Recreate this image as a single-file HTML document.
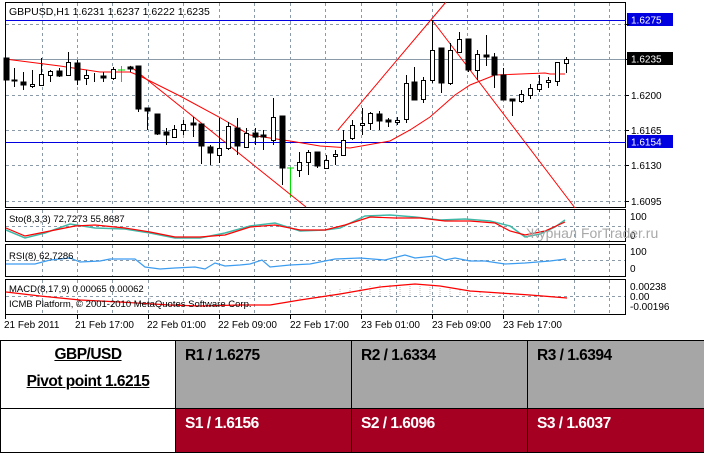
<!DOCTYPE html>
<html><head><meta charset="utf-8"><style>
*{margin:0;padding:0}
body{width:704px;height:455px;background:#fff;overflow:hidden;position:relative;font-family:"Liberation Sans",sans-serif}
svg{position:absolute;left:0;top:0}
table{position:absolute;left:0;top:340px;border-collapse:collapse;width:704px;table-layout:fixed}
td{border:1px solid #000;vertical-align:top;font-weight:bold;font-size:15.5px;padding:6px 0 0 9px;letter-spacing:-0.5px}
.g{background:#a6a6a6;color:#000}
.r{background:#a50021;color:#fff}
.h{text-align:center;padding:5px 0 0 0}
.h u{display:inline-block;margin-bottom:9px}
</style></head><body>
<svg width="704" height="340" xmlns="http://www.w3.org/2000/svg" font-family="Liberation Sans, sans-serif" font-size="10">
<g fill="none" stroke="#000">
<rect x="5.5" y="2.5" width="620" height="205"/>
<rect x="5.5" y="209.5" width="620" height="32"/>
<rect x="5.5" y="244.5" width="620" height="32"/>
<rect x="5.5" y="279.5" width="620" height="35"/>
</g>
<g stroke="#8a9aa8" stroke-dasharray="3,3" stroke-width="1">
<path d="M42.5 3V207M77.5 3V207M112.5 3V207M148.5 3V207M183.5 3V207M219.5 3V207M254.5 3V207M290.5 3V207M325.5 3V207M361.5 3V207M396.5 3V207M432.5 3V207M467.5 3V207M503.5 3V207M538.5 3V207M574.5 3V207M609.5 3V207"/>
<path d="M42.5 210V241M77.5 210V241M112.5 210V241M148.5 210V241M183.5 210V241M219.5 210V241M254.5 210V241M290.5 210V241M325.5 210V241M361.5 210V241M396.5 210V241M432.5 210V241M467.5 210V241M503.5 210V241M538.5 210V241M574.5 210V241M609.5 210V241"/>
<path d="M42.5 245V276M77.5 245V276M112.5 245V276M148.5 245V276M183.5 245V276M219.5 245V276M254.5 245V276M290.5 245V276M325.5 245V276M361.5 245V276M396.5 245V276M432.5 245V276M467.5 245V276M503.5 245V276M538.5 245V276M574.5 245V276M609.5 245V276"/>
<path d="M42.5 280V314M77.5 280V314M112.5 280V314M148.5 280V314M183.5 280V314M219.5 280V314M254.5 280V314M290.5 280V314M325.5 280V314M361.5 280V314M396.5 280V314M432.5 280V314M467.5 280V314M503.5 280V314M538.5 280V314M574.5 280V314M609.5 280V314"/>
<path d="M6 24.5H625M6 95.5H625M6 130.5H625M6 165.5H625M6 201.5H625M6 226.5H625M6 260.5H625M6 296.5H625"/>
</g>
<path d="M6 59.5H625" stroke="#8a9aa8"/>
<path d="M6 20.5H625M6 142.5H625" stroke="#0000e0"/>
<text x="9" y="15" font-size="10.5">GBPUSD,H1  1.6231 1.6237 1.6222 1.6235</text>
<path d="M121.5 66V82M118 70H125M290.5 168V197M287 168H294" stroke="#00e000"/>
<g fill="none" stroke="#f00" stroke-width="1">
<path d="M5 59L60 66L100 72L130 72L140 76L180 96L219 117L250 135L290 141L320 146L350 148L390 141L410 130L430 117L455 95L470 85L495 75L545 73L550 74L565 74"/>
<path d="M130 66L306 207"/>
<path d="M338 130L446 2"/>
<path d="M432 20L575 208"/>
</g>
<g font-size="10">
<rect x="627" y="13" width="46" height="13" fill="#0000e0"/><text x="631" y="23.5" fill="#fff">1.6275</text>
<rect x="627" y="52" width="46" height="13" fill="#000"/><text x="631" y="62.5" fill="#fff">1.6235</text>
<text x="631" y="99">1.6200</text><text x="631" y="134">1.6165</text>
<rect x="627" y="135" width="46" height="13" fill="#0000e0"/><text x="631" y="145.5" fill="#fff">1.6154</text>
<text x="631" y="169">1.6130</text><text x="631" y="205">1.6095</text>
<text x="630" y="220">100</text><text x="630" y="239">0</text>
<text x="630" y="255">100</text><text x="630" y="272">0</text>
<text x="630" y="290">0.00238</text><text x="630" y="300">0.00</text><text x="630" y="310">-0.00196</text>
</g>
<path d="M626 24.5h3M626 59.5h3M626 95.5h3M626 130.5h3M626 165.5h3M626 201.5h3" stroke="#000"/>
<polyline fill="none" stroke="#40b8a8" stroke-width="1.5" points="6,230 25,238 45,233 70,224 95,228 125,229 150,233 175,238 200,238 225,233 250,226 275,223 300,231 325,230 340,228 365,216 390,215 415,217 440,220 465,219 490,221 510,226 525,237 540,234 555,227 565,220"/>
<polyline fill="none" stroke="#f00" stroke-width="1.2" points="6,228 25,236 45,232 75,226 95,225 125,228 150,232 175,237 200,237 225,235 250,227 275,225 300,230 325,230 345,225 370,217 395,218 420,218 445,221 470,221 495,223 510,231 525,235 545,231 565,222"/>
<text x="9" y="222" font-size="9.5">Sto(8,3,3) 72,7273 55,8687</text>
<text x="526" y="238" font-size="14" fill="#a8a8a8">Журнал ForTrader.ru</text>
<polyline fill="none" stroke="#3c9cf0" stroke-width="1.2" points="6,264 35,264 50,260 70,258 80,262 100,261 110,259 135,259 145,267 160,269 175,268 195,267 205,269 215,263 225,266 240,265 250,264 262,260 270,267 290,265 310,264 335,259 360,258 385,260 405,255 415,258 435,256 445,260 455,258 470,261 485,261 505,264 525,263 550,261 566,259"/>
<text x="9" y="259" font-size="9.5">RSI(8) 62,7286</text>
<g stroke="#c0c0c0" stroke-dasharray="1,1"><path d="M150 296V300M200 296V300M250 296V300M300 296V300M330 290V296M340 289V296M350 288V296M360 287V296M370 286V296M380 285V296M390 285V296M400 285V296M410 286V296M420 286V296M430 287V296M440 288V296M450 289V296M460 290V296M470 291V296M480 292V296M490 292V296M500 293V296M510 294V296M520 294V296M530 295V296"/></g>
<polyline fill="none" stroke="#f00" stroke-width="1.2" points="6,292 40,296 80,300 120,302 170,305 200,306 240,305 270,305 300,300 340,294 380,287 415,284 440,286 470,291 500,293 530,295 567,298"/>
<text x="9" y="292" font-size="9.5">MACD(8,17,9) 0.00065 0.00062</text>
<text x="9" y="307" font-size="9.5">ICMB Platform, © 2001-2010 MetaQuotes Software Corp.</text>
<g font-size="10"><text x="4" y="328">21 Feb 2011</text><text x="75" y="328">21 Feb 17:00</text><text x="147" y="328">22 Feb 01:00</text><text x="218" y="328">22 Feb 09:00</text><text x="290" y="328">22 Feb 17:00</text><text x="361" y="328">23 Feb 01:00</text><text x="432" y="328">23 Feb 09:00</text><text x="503" y="328">23 Feb 17:00</text></g>
<path d="M5.5 315v4M77.5 315v4M148.5 315v4M219.5 315v4M290.5 315v4M361.5 315v4M432.5 315v4M503.5 315v4" stroke="#000"/>
<g stroke="#000" fill="#000">
<path d="M6.5 58V80M14.5 68V87M23.5 72V90M32.5 70V88M41.5 58V85M50.5 70V82M59.5 68V77M68.5 52V75M77.5 60V85M86.5 70V85M94.5 73V82M103.5 72V82M113.5 67V80M130.5 66V72M138.5 66V112M147.5 108V130M157.5 114V135M166.5 128V145M174.5 125V137M183.5 120V135M193.5 117V137M201.5 124V164M210.5 145V165M219.5 118V163M228.5 122V150M237.5 118V155M246.5 128V148M255.5 128V145M263.5 130V150M273.5 98V145M282.5 116V185M299.5 152V177M308.5 150V175M317.5 152V168M326.5 155V168M335.5 150V165M343.5 130V155M352.5 120V140M362.5 108V135M370.5 112V130M379.5 111V130M388.5 118V127M397.5 117V125M406.5 75V123M414.5 67V100M423.5 77V103M432.5 20V83M441.5 48V93M450.5 43V85M459.5 32V52M468.5 39V72M477.5 50V80M486.5 35V66M494.5 53V88M503.5 68V100M512.5 100V116M521.5 90V103M530.5 84V99M539.5 75V92M548.5 77V88M557.5 62V86M566.5 57V73" fill="none"/>
<rect x="4" y="58" width="5" height="22"/><rect x="12" y="80" width="5" height="1"/><rect x="21" y="82" width="5" height="3"/>
<rect x="57" y="71" width="5" height="5"/><rect x="75" y="63" width="5" height="17"/><rect x="101" y="76" width="5" height="2"/>
<rect x="128" y="67" width="5" height="2"/><rect x="136" y="66" width="5" height="43"/><rect x="145" y="108" width="5" height="3"/>
<rect x="155" y="114" width="5" height="20"/><rect x="164" y="132" width="5" height="3"/><rect x="191" y="123" width="5" height="2"/>
<rect x="199" y="124" width="5" height="22"/><rect x="208" y="147" width="5" height="6"/><rect x="235" y="128" width="5" height="18"/>
<rect x="253" y="133" width="5" height="4"/><rect x="261" y="135" width="5" height="2"/><rect x="280" y="116" width="5" height="52"/>
<rect x="315" y="152" width="5" height="14"/><rect x="377" y="114" width="5" height="7"/><rect x="386" y="120" width="5" height="2"/>
<rect x="412" y="82" width="5" height="18"/><rect x="439" y="48" width="5" height="35"/><rect x="466" y="39" width="5" height="31"/>
<rect x="484" y="55" width="5" height="2"/><rect x="492" y="57" width="5" height="18"/><rect x="501" y="75" width="5" height="25"/><rect x="510" y="99" width="5" height="2"/>
</g>
<g stroke="#000" fill="#fff">
<rect x="30.5" y="84.5" width="4" height="2"/><rect x="39.5" y="74.5" width="4" height="11"/><rect x="48.5" y="71.5" width="4" height="4"/>
<rect x="66.5" y="62.5" width="4" height="13"/><rect x="84.5" y="75.5" width="4" height="3"/><rect x="111.5" y="69.5" width="4" height="9"/>
<rect x="172.5" y="129.5" width="4" height="8"/><rect x="181.5" y="124.5" width="4" height="6"/><rect x="217.5" y="148.5" width="4" height="7"/>
<rect x="226.5" y="126.5" width="4" height="22"/><rect x="244.5" y="133.5" width="4" height="14"/><rect x="271.5" y="117.5" width="4" height="23"/>
<rect x="297.5" y="162.5" width="4" height="8"/><rect x="306.5" y="152.5" width="4" height="10"/><rect x="324.5" y="160.5" width="4" height="8"/>
<rect x="333.5" y="154.5" width="4" height="2"/><rect x="341.5" y="140.5" width="4" height="15"/><rect x="350.5" y="125.5" width="4" height="13"/>
<rect x="360.5" y="123.5" width="4" height="2"/><rect x="368.5" y="113.5" width="4" height="10"/><rect x="395.5" y="120.5" width="4" height="2"/>
<rect x="404.5" y="83.5" width="4" height="36"/><rect x="421.5" y="80.5" width="4" height="19"/><rect x="430.5" y="50.5" width="4" height="30"/>
<rect x="448.5" y="50.5" width="4" height="33"/><rect x="457.5" y="39.5" width="4" height="13"/><rect x="475.5" y="54.5" width="4" height="16"/>
<rect x="519.5" y="94.5" width="4" height="7"/><rect x="528.5" y="88.5" width="4" height="7"/><rect x="537.5" y="84.5" width="4" height="5"/>
<rect x="546.5" y="80.5" width="4" height="2"/><rect x="555.5" y="62.5" width="4" height="19"/><rect x="564.5" y="59.5" width="4" height="4"/>
</g>
</svg>
<table>
<colgroup><col style="width:175px"><col style="width:176px"><col style="width:176px"><col style="width:177px"></colgroup>
<tr style="height:68px"><td class="h"><u>GBP/USD</u><br><u>Pivot point 1.6215</u></td><td class="g">R1 / 1.6275</td><td class="g">R2 / 1.6334</td><td class="g">R3 / 1.6394</td></tr>
<tr style="height:44px"><td></td><td class="r">S1 / 1.6156</td><td class="r">S2 / 1.6096</td><td class="r">S3 / 1.6037</td></tr>
</table>
</body></html>
